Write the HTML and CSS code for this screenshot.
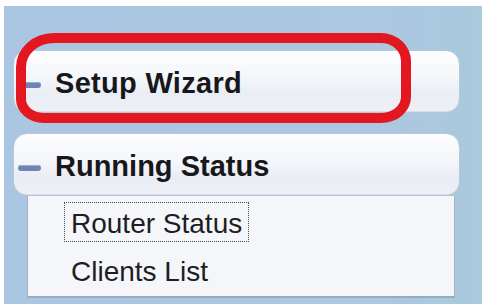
FILE: index.html
```html
<!DOCTYPE html>
<html>
<head>
<meta charset="utf-8">
<link rel="stylesheet" href="styles.css">
</head>
<body>
<div class="sidebar">
  <div class="menu-head">
    <span class="minus"></span>
    <span class="head-label wide">Setup Wizard</span>
    <div class="annotation"></div>
  </div>
  <div class="menu-head second">
    <span class="minus"></span>
    <span class="head-label">Running Status</span>
  </div>
  <ul class="submenu">
    <li><span class="focused">Router Status</span></li>
    <li>Clients List</li>
  </ul>
</div>
</body>
</html>
```
FILE: styles.css
```css
html, body {
  margin: 0;
  padding: 0;
  background: #ffffff;
}
body {
  width: 482px;
  height: 304px;
  overflow: hidden;
  font-family: "Liberation Sans", Arial, sans-serif;
}
.sidebar {
  margin: 6px 0 0 4px;
  height: 298px;
  box-sizing: border-box;
  background: linear-gradient(90deg, #aac6e2 0%, #abc7e1 80%, #a9c9dc 100%);
  padding: 44px 22px 0 9px;
}
.menu-head {
  position: relative;
  height: 63px;
  box-sizing: border-box;
  border: 1px solid #b9c7d8;
  border-radius: 14px;
  background: linear-gradient(180deg, #fdfdff 0%, #f4f6fa 45%, #e9edf4 70%, #eef1f6 100%);
  display: flex;
  align-items: center;
  padding-left: 4px;
  box-shadow: inset 0 -1px 0 #d8dfe9;
}
.menu-head.second {
  margin-top: 20px;
}
.minus {
  width: 23px;
  height: 6px;
  margin-top: 7px;
  border-radius: 3px;
  background: #6f84b3;
  box-shadow: inset 0 1px 0 #9fb0d2;
  flex: none;
}
.head-label {
  margin-left: 14px;
  margin-top: 3px;
  font-size: 29px;
  font-weight: bold;
  color: #18181c;
}
.head-label.wide {
  letter-spacing: 0.3px;
}
.annotation {
  position: absolute;
  left: 2px;
  top: -18px;
  width: 395px;
  height: 90px;
  box-sizing: border-box;
  border: 10px solid #e2171f;
  border-radius: 38px 30px 30px 28px / 34px 28px 26px 24px;
}
.submenu {
  list-style: none;
  margin: 0 5px 0 14px;
  padding: 5px 0 0 43px;
  height: 102px;
  box-sizing: border-box;
  background: #f5f6fa;
  border: 1px solid #a3b3c8;
  border-top: none;
  border-bottom: 2px solid #9aaac0;
}
.submenu li {
  font-size: 28px;
  line-height: 47px;
  height: 47px;
  color: #1e1e22;
}
.focused {
  display: inline-block;
  line-height: 32px;
  padding: 5px 6px 1px;
  margin-left: -7px;
  border: 1px dotted #4a4a4a;
  vertical-align: top;
  margin-top: 1px;
}
```
